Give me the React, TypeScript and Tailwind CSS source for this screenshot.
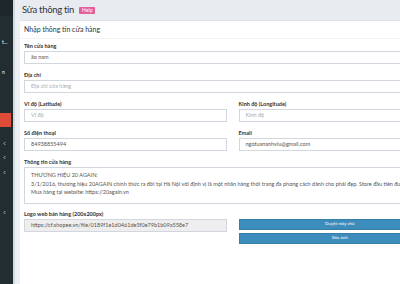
import { ChevronLeft } from "lucide-react";

const font = { fontFamily: '"Lato", "Noto Sans", sans-serif' };

function Label({ children }: { children: React.ReactNode }) {
  return <div className="mb-[2px] text-[5.5px] font-bold leading-[6px] whitespace-nowrap text-[#333]">{children}</div>;
}

function Input({ value, placeholder, disabled }: { value?: string; placeholder?: string; disabled?: boolean }) {
  return (
    <div
      className={`flex h-[13px] items-center overflow-hidden border border-[#d2d6de] px-[6px] text-[5.5px] whitespace-nowrap ${
        disabled ? "bg-[#eeeeee] text-[#555]" : "bg-white text-[#555]"
      }`}
    >
      {value ? value : <span className="text-[#aaa]">{placeholder}</span>}
    </div>
  );
}

function Chevron() {
  return (
    <div className="flex h-[14px] items-center pl-[2px] text-[#b8c7ce]">
      <ChevronLeft size={5} strokeWidth={4} className="block" />
    </div>
  );
}

export default function App() {
  return (
    <div className="flex h-[284px] w-[400px] overflow-hidden bg-[#ecf0f5]" style={font}>
      <aside className="flex w-[13px] shrink-0 flex-col bg-[#222d32] text-white">
        <div className="h-[16px] shrink-0 bg-[#1e282c]" />
        <div className="mt-[24px] h-[5px] shrink-0 pl-[2px] text-[5px] leading-[5px]">t...</div>
        <div className="mt-[25px] h-[5px] shrink-0 pl-[2px] text-[5px] leading-[5px]">n</div>
        <div className="mt-[38px] h-[14px] w-[11px] shrink-0 bg-[#dd4b39]" />
        <div className="mt-[9px] flex shrink-0 flex-col">
          <Chevron />
          <Chevron />
          <div className="h-[1px]" />
          <Chevron />
        </div>
        <div className="mt-[26px] shrink-0">
          <Chevron />
        </div>
      </aside>
      <div className="w-[2px] shrink-0 bg-[#d2d6de]" />
      <main className="flex min-w-[430px] flex-col pl-[5px]">
        <div className="flex h-[20px] items-center gap-[5px] bg-[#e8ecf1] pl-[2px]">
          <h1 className="text-[9.5px] leading-none tracking-[-0.3px] text-[#333]">Sửa thông tin</h1>
          <span className="rounded-[1px] bg-[#e5609b] px-[3px] text-[5px] leading-[7px] text-white">Help</span>
        </div>
        <section className="flex-1 border-t border-[#dfe3e8] bg-white">
          <div className="border-b border-[#f4f4f4] px-[4px] pt-[3px] pb-[4px]">
            <h2 className="text-[7px] leading-[10px] text-[#333]">Nhập thông tin cửa hàng</h2>
          </div>
          <div className="flex flex-col gap-[8px] px-[4px] pt-[4px]">
            <div>
              <Label>Tên cửa hàng</Label>
              <Input value="ão nam" />
            </div>
            <div>
              <Label>Địa chỉ</Label>
              <Input placeholder="Địa chỉ cửa hàng" />
            </div>
            <div className="grid grid-cols-2 gap-x-[12px] gap-y-[8px]">
              <div>
                <Label>Vĩ độ (Latitude)</Label>
                <Input placeholder="Vĩ độ" />
              </div>
              <div>
                <Label>Kinh độ (Longitude)</Label>
                <Input placeholder="Kinh độ" />
              </div>
              <div>
                <Label>Số điện thoại</Label>
                <Input value="84938855494" />
              </div>
              <div>
                <Label>Email</Label>
                <Input value="ngotuananhvlu@gmail.com" />
              </div>
            </div>
            <div>
              <Label>Thông tin cửa hàng</Label>
              <div className="h-[37px] overflow-hidden border border-[#d2d6de] px-[6px] pt-[3px] text-[5.5px] leading-[8.5px] whitespace-nowrap text-[#555]">
                <div>THƯƠNG HIỆU 20 AGAIN:</div>
                <div>
                  3/1/2016, thương hiệu 20AGAIN chính thức ra đời tại Hà Nội với định vị là một nhãn hàng thời trang đa phong cách dành cho phái đẹp. Store đầu tiên được đặt tại 50
                </div>
                <div>Mua hàng tại website: https://20again.vn</div>
              </div>
            </div>
            <div className="-mt-[1px] grid grid-cols-2 gap-x-[12px]">
              <div>
                <Label>Logo web bán hàng (200x200px)</Label>
                <Input disabled value="https://cf.shopee.vn/file/0189f1e1d0461de5f0e79b1b09a558e7" />
              </div>
              <div className="flex flex-col gap-[3px] pt-[8px]">
                <button className="h-[11px] border border-[#367fa9] bg-[#3c8dbc] text-[4.5px] text-white">Duyệt máy chủ</button>
                <button className="h-[11px] border border-[#367fa9] bg-[#3c8dbc] text-[4.5px] text-white">Xóa ảnh</button>
              </div>
            </div>
          </div>
        </section>
      </main>
    </div>
  );
}
